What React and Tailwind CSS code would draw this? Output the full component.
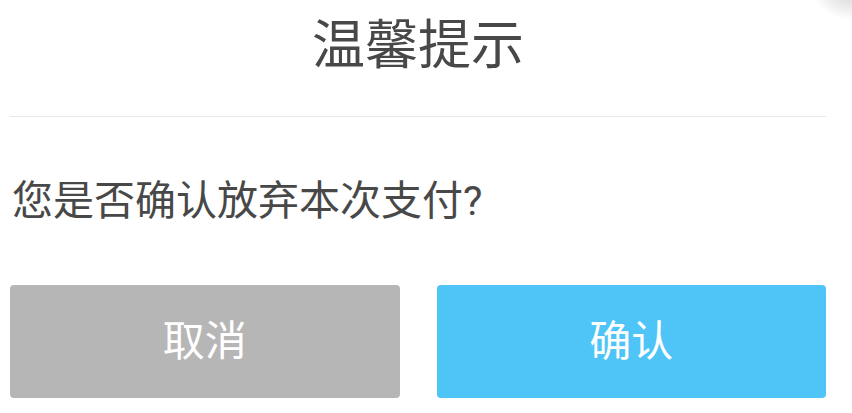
import React from 'react';

const font = { fontFamily: 'Roboto, "Noto Sans CJK SC", sans-serif' };

// 支付放弃确认弹窗
const App = () => {
  return (
    <div
      className="relative w-[852px] h-[413px] bg-white overflow-hidden font-normal"
      style={font}
    >
      {/* 右上角阴影 */}
      <div className="absolute -top-[40px] -right-[40px] w-[80px] h-[60px] rounded-full bg-[radial-gradient(closest-side,rgba(0,0,0,0.18),rgba(0,0,0,0))]" />

      <div className="ml-[10px] w-[816px] flex flex-col">
        <div className="pt-[20px] pb-[44px] text-center text-[53px] leading-[52px] text-[#484848]">
          温馨提示
        </div>
        <div className="h-px bg-[#e8e8e8]" />

        <p className="mt-[63px] pl-[2px] text-[41px] leading-[42px] text-[#484848]">
          您是否确认放弃本次支付?
        </p>

        <div className="mt-[63px] grid grid-cols-2 gap-[37px]">
          <button className="h-[113px] rounded-[4px] bg-[#b7b6b7] text-white text-[42px] leading-none">
            取消
          </button>
          <button className="h-[113px] rounded-[4px] bg-[#4fc4f7] text-white text-[42px] leading-none">
            确认
          </button>
        </div>
      </div>
    </div>
  );
};

export default App;
